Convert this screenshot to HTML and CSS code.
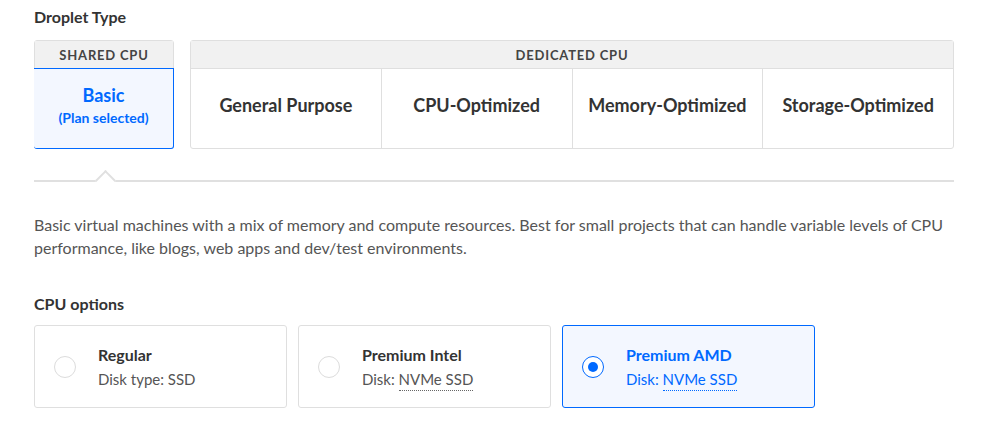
FILE: index.html
```html
<!DOCTYPE html>
<html lang="en">
<head>
<meta charset="utf-8">
<title>Droplet Type</title>
<link rel="stylesheet" href="styles.css">
</head>
<body>
<main class="page">
  <h2 class="section-title">Droplet Type</h2>
  <div class="type-row">
    <div class="group group-shared">
      <div class="group-head">SHARED CPU</div>
      <div class="group-body">
        <div class="plan plan-selected">
          <span class="plan-name">Basic</span>
          <span class="plan-note">(Plan selected)</span>
        </div>
      </div>
    </div>
    <div class="group group-dedicated">
      <div class="group-head">DEDICATED CPU</div>
      <div class="group-body">
        <div class="plan"><span class="plan-name">General Purpose</span></div>
        <div class="plan"><span class="plan-name">CPU-Optimized</span></div>
        <div class="plan"><span class="plan-name">Memory-Optimized</span></div>
        <div class="plan"><span class="plan-name">Storage-Optimized</span></div>
      </div>
    </div>
  </div>
  <div class="divider"><span class="caret"></span></div>
  <p class="description">Basic virtual machines with a mix of memory and compute resources. Best for small projects that can handle variable levels of CPU performance, like blogs, web apps and dev/test environments.</p>
  <h3 class="section-title sub">CPU options</h3>
  <div class="options">
    <label class="option">
      <span class="radio"></span>
      <span class="option-text">
        <span class="option-name">Regular</span>
        <span class="option-disk">Disk type: SSD</span>
      </span>
    </label>
    <label class="option">
      <span class="radio"></span>
      <span class="option-text">
        <span class="option-name">Premium Intel</span>
        <span class="option-disk">Disk: <span class="dotted">NVMe SSD</span></span>
      </span>
    </label>
    <label class="option option-selected">
      <span class="radio radio-on"></span>
      <span class="option-text">
        <span class="option-name">Premium AMD</span>
        <span class="option-disk">Disk: <span class="dotted">NVMe SSD</span></span>
      </span>
    </label>
  </div>
</main>
</body>
</html>
```
FILE: styles.css
```css
* { box-sizing: border-box; }
html, body { margin: 0; padding: 0; background: #fff; }
body {
  font-family: "Lato", "Liberation Sans", sans-serif;
  color: #333;
}
.page {
  padding: 7px 35px 0 34px;
}
.section-title {
  margin: 0;
  font-size: 16px;
  font-weight: 700;
  line-height: 20px;
  color: #333;
}
.type-row {
  display: flex;
  gap: 16px;
  margin-top: 13px;
}
.group {
  border: 1px solid #dfdfdf;
  border-radius: 3px;
  display: flex;
  flex-direction: column;
}
.group-shared { width: 140px; }
.group-dedicated { flex: 1; }
.group-head {
  height: 28px;
  background: #f1f1f1;
  border-bottom: 1px solid #dfdfdf;
  font-size: 13px;
  font-weight: 700;
  letter-spacing: 0.8px;
  color: #444;
  display: flex;
  align-items: center;
  justify-content: center;
}
.group-body {
  display: flex;
  height: 79px;
}
.plan {
  flex: 1;
  display: flex;
  flex-direction: column;
  align-items: center;
  justify-content: center;
  padding-bottom: 7px;
  border-left: 1px solid #dfdfdf;
}
.plan:first-child { border-left: none; }
.plan-name {
  font-size: 18px;
  font-weight: 700;
  color: #333;
}
.plan-selected {
  margin: -1px;
  border: 1px solid #0069ff;
  border-radius: 0 0 3px 3px;
  background: #f3f7ff;
  justify-content: flex-start;
  padding: 15px 0 0;
}
.plan-selected .plan-name { color: #0069ff; }
.plan-note {
  margin-top: 3px;
  font-size: 14px;
  font-weight: 700;
  color: #0069ff;
}
.divider {
  position: relative;
  margin-top: 31px;
  height: 2px;
  background: #e0e0e0;
}
.caret {
  position: absolute;
  left: 64px;
  top: -7px;
  width: 15px;
  height: 15px;
  background: #fff;
  border-left: 2px solid #e0e0e0;
  border-top: 2px solid #e0e0e0;
  transform: rotate(45deg);
}
.description {
  margin: 31px 0 0;
  font-size: 16px;
  line-height: 23px;
  color: #555;
}
.sub { margin-top: 35px; }
.options {
  display: flex;
  gap: 11px;
  margin-top: 11px;
}
.option {
  width: 253px;
  height: 83px;
  border: 1px solid #dfdfdf;
  border-radius: 3px;
  display: flex;
  align-items: center;
  padding-left: 19px;
  cursor: pointer;
}
.option-selected {
  border-color: #0069ff;
  background: #f3f7ff;
}
.radio {
  width: 22px;
  height: 22px;
  border: 1px solid #dcdcdc;
  border-radius: 50%;
  background: #fff;
  flex: none;
  display: flex;
  align-items: center;
  justify-content: center;
}
.radio-on { border-color: #0069ff; }
.radio-on::after {
  content: "";
  width: 10px;
  height: 10px;
  border-radius: 50%;
  background: #0069ff;
}
.option-text {
  margin-left: 22px;
  display: flex;
  flex-direction: column;
  gap: 4px;
}
.option-name {
  font-size: 16px;
  line-height: 20px;
  font-weight: 700;
  color: #333;
}
.option-disk {
  font-size: 15px;
  line-height: 20px;
  color: #555;
}
.option-selected .option-name,
.option-selected .option-disk { color: #0069ff; }
.dotted {
  border-bottom: 1px dotted currentColor;
  padding-bottom: 2px;
}
.option .dotted { border-bottom-color: #666; }
.option-selected .dotted { border-bottom-color: #0069ff; }
```
